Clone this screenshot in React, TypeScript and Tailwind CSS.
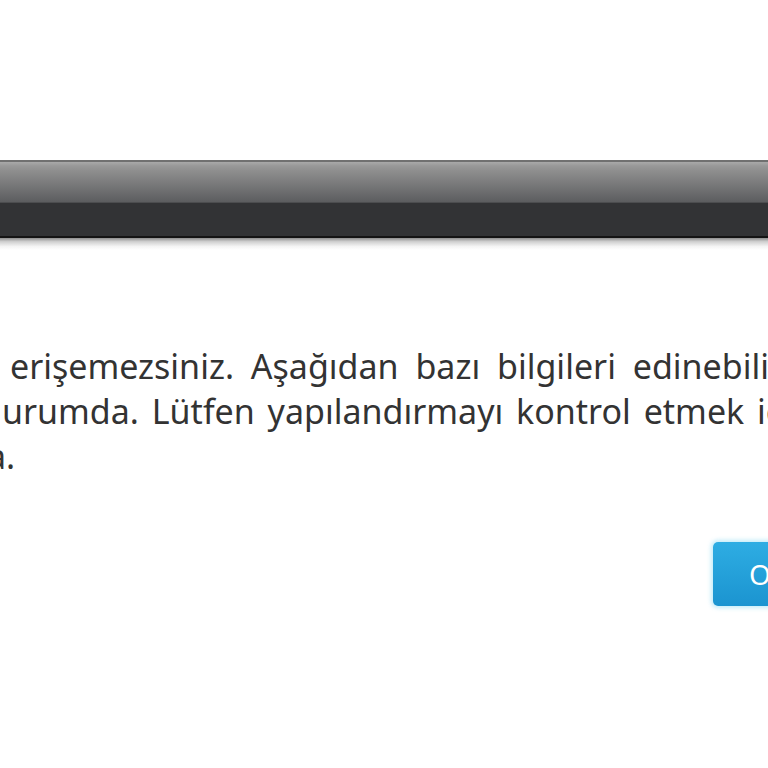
import React from 'react';

const font = "font-['Segoe_UI','Noto_Sans','Open_Sans',sans-serif]";

export default function App() {
  return (
    <div className={`w-[768px] h-[768px] overflow-hidden bg-white ${font}`}>
      {/* header bar */}
      <div className="mt-[160px]">
        <div className="h-[2px] bg-[#707070]" />
        <div className="h-[40px] bg-[linear-gradient(to_bottom,#a9a9a9_0%,#989898_10%,#8e8e8e_22%,#5c5d5f_100%)]" />
        <div className="h-[1px] bg-[#4c4d4f]" />
        <div className="h-[33px] bg-[#323335]" />
        <div className="h-[2px] bg-[#141414]" />
        <div className="h-[12px] bg-[linear-gradient(to_bottom,#8e8e8e_0%,#cfcfcf_30%,#f4f4f4_70%,#ffffff_100%)]" />
      </div>

      {/* message */}
      <div className="mt-[94px] text-[34px] leading-[45px] text-[#333333] whitespace-nowrap">
        <p className="pl-[10px] [word-spacing:8px]">erişemezsiniz. Aşağıdan bazı bilgileri edinebilirsiniz.</p>
        <p className="pl-[2px] [word-spacing:4px]">urumda. Lütfen yapılandırmayı kontrol etmek için yöneticinize başvurun.</p>
        <p className="-ml-[13px]">a.</p>
      </div>

      {/* action */}
      <div className="mt-[63px] pl-[713px] whitespace-nowrap">
        <button className="h-[64px] px-[36px] rounded-[5px] bg-[linear-gradient(to_bottom,#2eade3_0%,#1b94d0_100%)] text-white text-[28px] shadow-[0_0_4px_2px_rgba(120,210,240,0.45)]">
          Oturum Aç
        </button>
      </div>
    </div>
  );
}
